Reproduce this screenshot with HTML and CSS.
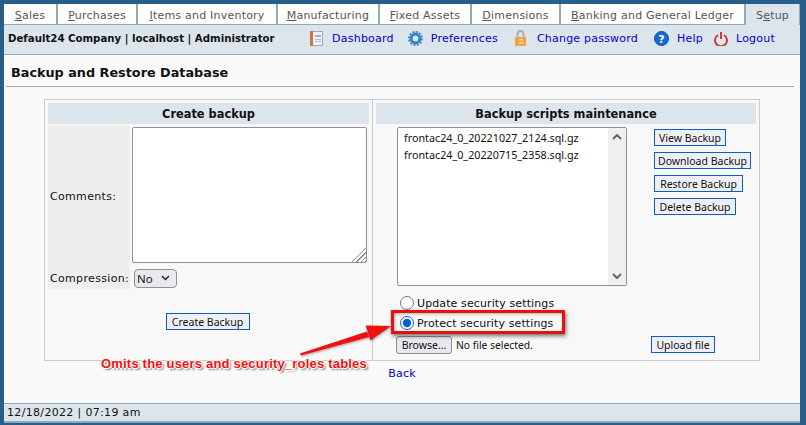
FILE: index.html
```html
<!DOCTYPE html>
<html lang="en">
<head>
<meta charset="utf-8">
<title>Backup and Restore Database</title>
<link rel="stylesheet" href="styles.css">
</head>
<body>
<div class="app">
  <nav class="tabs">
    <a class="tab"><u>S</u>ales</a>
    <a class="tab"><u>P</u>urchases</a>
    <a class="tab"><u>I</u>tems and Inventory</a>
    <a class="tab"><u>M</u>anufacturing</a>
    <a class="tab"><u>F</u>ixed Assets</a>
    <a class="tab"><u>D</u>imensions</a>
    <a class="tab"><u>B</u>anking and General Ledger</a>
    <a class="tab active">S<u>e</u>tup</a>
  </nav>
  <header class="topbar">
    <strong class="who">Default24 Company | localhost | Administrator</strong>
    <div class="menu">
      <a class="mi mi-dash">
        <svg width="13" height="15" viewBox="0 0 13 15"><rect x="0.5" y="0.5" width="12" height="14" fill="#eef1f6" stroke="#a5a5b2"/><rect x="0" y="0" width="3" height="15" fill="#d9703a"/><rect x="5" y="4" width="6" height="2" fill="#8fb0dc"/><rect x="5" y="8" width="6" height="1" fill="#a9c0e0"/><rect x="5" y="10" width="6" height="1" fill="#a9c0e0"/></svg>
        Dashboard</a>
      <a class="mi mi-pref">
        <svg width="15" height="15" viewBox="0 0 16 16"><circle cx="8" cy="8" r="4.6" fill="none" stroke="#2f7fc9" stroke-width="3"/><circle cx="8" cy="8" r="7" fill="none" stroke="#3a86cc" stroke-width="2" stroke-dasharray="2.2 1.47"/><circle cx="8" cy="8" r="2.2" fill="#dfeaf5"/></svg>
        Preferences</a>
      <a class="mi mi-lock">
        <svg width="13" height="16" viewBox="0 0 13 16"><path d="M3.5 7V4a3 3 0 0 1 6 0v3" fill="none" stroke="#b3aa9a" stroke-width="1.8"/><rect x="1" y="7" width="11" height="9" rx="1" fill="#f5a23a"/><rect x="5" y="9" width="4" height="1.5" fill="#ffe6bb"/><rect x="5" y="12" width="4" height="1.5" fill="#ffe6bb"/></svg>
        Change password</a>
      <a class="mi mi-help">
        <svg width="15" height="15" viewBox="0 0 15 15"><circle cx="7.5" cy="7.5" r="7" fill="#1769cf" stroke="#0f4fa8"/><text x="7.5" y="11.5" class="qmark" text-anchor="middle">?</text></svg>
        Help</a>
      <a class="mi mi-out">
        <svg width="14" height="15" viewBox="0 0 14 15"><path d="M4 4a6 6 0 1 0 6 0" fill="none" stroke="#cf3a3a" stroke-width="2"/><path d="M7 1v7" stroke="#cf3a3a" stroke-width="2"/></svg>
        Logout</a>
    </div>
  </header>
  <main class="content">
    <h1 class="title">Backup and Restore Database</h1>
    <div class="panel">
      <section class="col col-left">
        <h2 class="colhead">Create backup</h2>
        <div class="row-comments">
          <label class="lbl lbl-comments">Comments:</label>
          <textarea class="comments"></textarea>
        </div>
        <div class="row-compress">
          <label class="lbl">Compression:</label>
          <select class="compress"><option>No</option></select>
        </div>
        <div class="create-wrap"><button class="btn w-create">Create Backup</button></div>
      </section>
      <section class="col col-right">
        <h2 class="colhead">Backup scripts maintenance</h2>
        <div class="files">
          <div class="listbox">
            <div class="items">
              <div>frontac24_0_20221027_2124.sql.gz</div>
              <div>frontac24_0_20220715_2358.sql.gz</div>
            </div>
            <div class="scroll">
              <svg width="10" height="6" viewBox="0 0 10 6"><path d="M1 5l4-4 4 4" fill="none" stroke="#666" stroke-width="2"/></svg>
              <svg width="10" height="6" viewBox="0 0 10 6"><path d="M1 1l4 4 4-4" fill="none" stroke="#666" stroke-width="2"/></svg>
            </div>
          </div>
          <div class="actions">
            <button class="btn w-view">View Backup</button>
            <button class="btn w-down">Download Backup</button>
            <button class="btn w-rest">Restore Backup</button>
            <button class="btn w-del">Delete Backup</button>
          </div>
        </div>
        <div class="radios">
          <label class="radio"><input type="radio" name="sec">Update security settings</label>
          <label class="radio"><input type="radio" name="sec" checked>Protect security settings</label>
        </div>
        <div class="upload">
          <button class="browse">Browse...</button>
          <span class="nofile">No file selected.</span>
          <button class="btn upload-btn">Upload file</button>
        </div>
      </section>
    </div>
    <a class="back">Back</a>
  </main>
  <footer class="foot">12/18/2022 | 07:19 am</footer>
  <div class="redbox"></div>
  <svg class="arrow" width="100" height="40" viewBox="0 0 100 40"><path d="M2 33.5L69 11.5 71 17 3 35.5Z" fill="#f01010"/><path d="M93 6L72.3 20.6 67.7 5.4Z" fill="#f01010"/></svg>
  <div class="note">Omits the users and security_roles tables</div>
</div>
</body>
</html>
```
FILE: styles.css
```css
* { box-sizing: border-box; }
html, body { margin: 0; height: 100%; }
body {
  background: #285e8a;
  padding: 4px 6px 2px 4px;
  font-family: "DejaVu Sans", sans-serif;
  font-size: 11px;
  color: #111;
  overflow: hidden;
}
.app {
  position: relative;
  height: 419px;
  background: #fafafa;
  display: flex;
  flex-direction: column;
}
.tabs {
  display: grid;
  grid-template-columns: 52px 78px 138px 100px 90px 87px 183px 1fr;
  column-gap: 2px;
  height: 21px;
  background: #8fabba;
  padding-bottom: 1px;
}
.tab {
  padding-top: 3px;
  line-height: 17px;
  text-align: center;
  background: #fff;
  color: #555;
  white-space: nowrap;
  letter-spacing: 0.02em;
}
.tab.active {
  background: #dde5ec;
  margin-bottom: -1px;
  margin-right: 1px;
}
.topbar {
  height: 30px;
  background: #dde5ec;
  border-bottom: 1px solid #8fabba;
  display: flex;
  align-items: center;
  justify-content: space-between;
  padding: 0 25px 3px 4px;
}
.who { font-size: 10.2px; color: #111; white-space: nowrap; }
.menu { display: flex; align-items: center; }
.mi {
  display: flex;
  align-items: center;
  gap: 8px;
  color: #0000c8;
  white-space: nowrap;
  letter-spacing: 0.02em;
}
.mi-dash { gap: 9px; }
.mi-pref { margin-left: 14px; }
.mi-lock { margin-left: 16px; gap: 10px; }
.mi-help { margin-left: 16px; }
.mi-out { margin-left: 11px; }
.qmark { font: bold 11px "DejaVu Sans", sans-serif; fill: #fff; }
.content {
  flex: 1;
  display: flex;
  flex-direction: column;
  align-items: center;
}
.title {
  align-self: stretch;
  margin: 0 6px 0 2px;
  padding: 10px 0 5px 5px;
  font-size: 12.8px;
  line-height: 16px;
  font-weight: bold;
  border-bottom: 1px solid #8fabba;
  height: 32px;
}
.panel {
  width: 716px;
  height: 262px;
  margin-top: 12px;
  border: 1px solid #ccc;
  display: grid;
  grid-template-columns: 327px 1fr;
  background: #f8f8f9;
}
.col { padding: 3px 3px 0; }
.col-right { border-left: 1px solid #ccc; }
.colhead {
  margin: 0 0 1px;
  height: 21px;
  line-height: 22px;
  background: #dde5ec;
  text-align: center;
  font-size: 11.4px;
  font-weight: bold;
}
.row-comments { display: flex; height: 142px; }
.lbl {
  width: 82px;
  background: #eee;
  padding-left: 2px;
  display: flex;
  align-items: center;
  flex: none;
  white-space: nowrap;
  letter-spacing: 0.03em;
}
.comments {
  width: 235px;
  height: 136px;
  margin: 2px 0 0 2px;
  border: 1px solid #8f8f9d;
  border-radius: 2px;
  background: #fff;
}
.comments::-webkit-resizer {
  background:
    linear-gradient(135deg, #fff 50%, transparent 50%),
    repeating-linear-gradient(135deg, #fff 0 2px, #8a8a8a 2px 3px);
}
.row-compress { display: flex; align-items: center; height: 22px; }
.row-compress .lbl { height: 22px; }
.compress {
  appearance: none;
  width: 43px;
  height: 19px;
  margin-left: 4px;
  border: 1px solid #8f8f9d;
  border-radius: 4px;
  background: #e9e9ed url("data:image/svg+xml,%3Csvg xmlns='http://www.w3.org/2000/svg' width='9' height='6'%3E%3Cpath d='M1 1l3.5 3.5L8 1' fill='none' stroke='%23222' stroke-width='1.4'/%3E%3C/svg%3E") no-repeat right 6px center;
  font: 11.5px "Noto Sans", sans-serif;
  color: #111;
  padding: 0 0 0 2px;
}
.create-wrap { display: flex; justify-content: center; padding: 24px 2px 0 0; }
.btn {
  height: 17px;
  padding: 1px 0 0;
  border: 1px solid #0a5fc4;
  background: #eff0f5;
  font: 10.5px/15px "Noto Sans", sans-serif;
  color: #111;
  white-space: nowrap;
  text-align: center;
}
.w-create { width: 84px; }
.w-view { width: 72px; }
.w-down { width: 97px; }
.w-rest { width: 89px; }
.w-del { width: 82px; }
.files { display: flex; padding-left: 21px; }
.listbox {
  width: 230px;
  height: 159px;
  margin-top: 2px;
  border: 1px solid #8f8f9d;
  border-radius: 2px;
  background: #fff;
  display: flex;
}
.items {
  flex: 1;
  padding: 2px 6px;
  font: 10.75px/17px "Noto Sans", sans-serif;
  color: #111;
}
.scroll {
  width: 18px;
  background: #f0f0f0;
  display: flex;
  flex-direction: column;
  justify-content: space-between;
  align-items: center;
  padding: 6px 0;
}
.actions {
  display: flex;
  flex-direction: column;
  align-items: flex-start;
  gap: 6px;
  margin: 4px 0 0 27px;
}
.radios { padding-left: 24px; margin-top: 7px; }
.radio {
  display: flex;
  align-items: center;
  height: 20px;
  letter-spacing: 0.01em;
  white-space: nowrap;
}
.radio input {
  width: 14px;
  height: 14px;
  margin: 0 3px 0 0;
  accent-color: #0a5fd0;
}
.upload { display: flex; align-items: center; padding-left: 20px; margin-top: 2px; height: 19px; }
.browse {
  width: 56px;
  height: 18px;
  padding: 0;
  border: 1px solid #8f8f9d;
  border-radius: 3px;
  background: #e9e9ed;
  font: 10.5px "Noto Sans", sans-serif;
  color: #111;
}
.nofile { margin-left: 4px; font: 10.3px "Noto Sans", sans-serif; }
.upload-btn { width: 64px; margin-left: auto; margin-right: 41px; }
.back {
  margin-top: 6px;
  color: #0000c8;
  letter-spacing: 0.02em;
}
.foot {
  height: 20px;
  background: #dde5ec;
  border-top: 1px solid #8fabba;
  border-bottom: 2px solid #8fabba;
  padding-left: 3px;
  line-height: 17px;
  letter-spacing: 0.03em;
  font-size: 11px;
}
.redbox {
  position: absolute;
  left: 387px;
  top: 306px;
  width: 174px;
  height: 24px;
  border: 3px solid #e8100f;
  box-shadow: 1px 2px 4px rgba(0,0,0,.55), inset 1px 1px 3px rgba(0,0,0,.3);
}
.arrow {
  position: absolute;
  left: 294px;
  top: 316px;
  filter: drop-shadow(1px 1px 1px rgba(0,0,0,.35));
}
.note {
  position: absolute;
  left: 97px;
  top: 352px;
  font: bold 13px/15px "Liberation Sans", sans-serif;
  color: #f01010;
  white-space: nowrap;
  letter-spacing: 0.015em;
  text-shadow: -1px 0 #fff, 1px 0 #fff, 0 -1px #fff, 0 1px #fff, 2px 2px 2px rgba(0,0,0,.5);
}
```
